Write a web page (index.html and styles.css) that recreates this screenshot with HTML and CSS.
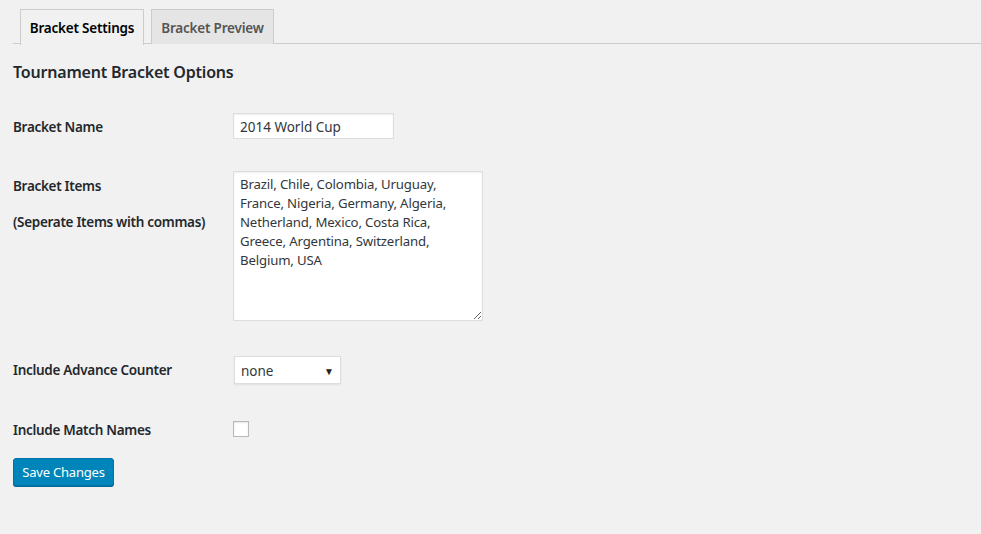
FILE: index.html
```html
<!DOCTYPE html>
<html>
<head>
<meta charset="utf-8">
<link rel="stylesheet" href="styles.css">
</head>
<body>
<div class="wrap">
  <nav class="tabs">
    <a class="tab active">Bracket Settings</a>
    <a class="tab">Bracket Preview</a>
  </nav>
  <h2 class="title">Tournament Bracket Options</h2>
  <form class="form">
    <div class="row row-name">
      <div class="label"><div class="lbl">Bracket Name</div></div>
      <div class="field"><input class="text" type="text" value="2014 World Cup"></div>
    </div>
    <div class="row row-items">
      <div class="label">
        <div class="lbl">Bracket Items</div>
        <div class="lbl note">(Seperate Items with commas)</div>
      </div>
      <div class="field"><textarea class="area">Brazil, Chile, Colombia, Uruguay, France, Nigeria, Germany, Algeria, Netherland, Mexico, Costa Rica, Greece, Argentina, Switzerland, Belgium, USA</textarea></div>
    </div>
    <div class="row row-counter">
      <div class="label"><div class="lbl">Include Advance Counter</div></div>
      <div class="field">
        <div class="select"><span>none</span><span class="arrow">&#9660;</span></div>
      </div>
    </div>
    <div class="row row-match">
      <div class="label"><div class="lbl">Include Match Names</div></div>
      <div class="field"><span class="check"></span></div>
    </div>
    <button type="button" class="btn">Save Changes</button>
  </form>
</div>
</body>
</html>
```
FILE: styles.css
```css
html, body {
  margin: 0;
  padding: 0;
  background: #f1f1f1;
  height: 100%;
}
body {
  font-family: "Noto Sans", "Open Sans", sans-serif;
  color: #23282d;
  font-size: 13px;
}
.wrap {
  padding: 9px 0 0 13px;
}
.tabs {
  display: flex;
  gap: 7px;
  padding-left: 7px;
  border-bottom: 1px solid #ccc;
  height: 35px;
  box-sizing: border-box;
}
.tab {
  display: block;
  height: 35px;
  box-sizing: border-box;
  border: 1px solid #ccc;
  border-bottom: none;
  background: #e5e5e5;
  color: #555;
  font-size: 13.5px;
  font-weight: 600;
  line-height: 36px;
  letter-spacing: -0.2px;
  text-align: center;
}
.tab.active {
  background: #f1f1f1;
  color: #000;
  height: 36px;
  margin-bottom: -1px;
}
.tab:first-child { width: 124px; }
.tab:last-child { width: 123px; }
.title {
  margin: 17px 0 0;
  font-size: 16px;
  font-weight: 600;
  line-height: 22px;
  letter-spacing: -0.2px;
  color: #23282d;
}
.form {
  padding-top: 30px;
}
.row {
  display: grid;
  grid-template-columns: 220px 1fr;
}
.lbl {
  font-size: 13.5px;
  font-weight: 600;
  line-height: 20px;
  letter-spacing: -0.3px;
}
.row-name .label { padding-top: 4px; }
.row-items { margin-top: 32px; }
.row-items .label { padding-top: 5px; }
.note { margin-top: 16px; }
.row-counter { margin-top: 35px; }
.row-counter .label { padding-top: 4px; }
.row-match { margin-top: 37px; }
.row-match .label { margin-top: -1px; }
.text {
  width: 161px;
  height: 26px;
  box-sizing: border-box;
  border: 1px solid #ddd;
  background: #fff;
  font-family: inherit;
  font-size: 13.5px;
  color: #32373c;
  padding: 1px 6px 0;
  margin: 0;
  outline: none;
  box-shadow: inset 0 1px 2px rgba(0,0,0,0.07);
}
.area {
  display: block;
  width: 250px;
  height: 150px;
  box-sizing: border-box;
  border: 1px solid #ddd;
  background: #fff;
  font-family: inherit;
  font-size: 13.2px;
  line-height: 19px;
  color: #32373c;
  padding: 3px 6px;
  margin: 0;
  outline: none;
  resize: both;
  box-shadow: inset 0 1px 2px rgba(0,0,0,0.07);
  overflow: hidden;
  letter-spacing: -0.15px;
}
.select {
  margin-left: 1px;
  width: 107px;
  height: 28px;
  box-sizing: border-box;
  border: 1px solid #ddd;
  background: #fff;
  display: flex;
  align-items: center;
  justify-content: space-between;
  padding: 1px 6px 0 6px;
  font-size: 13.5px;
  color: #32373c;
  box-shadow: 0 1px 2px rgba(0,0,0,0.07);
}
.arrow {
  font-size: 10px;
  color: #222;
}
.check {
  display: block;
  width: 16px;
  height: 16px;
  box-sizing: border-box;
  border: 1px solid #b4b9be;
  background: #fff;
  box-shadow: inset 0 1px 2px rgba(0,0,0,0.1);
}
.btn {
  display: block;
  margin-top: 18px;
  height: 28px;
  width: 101px;
  padding: 0;
  background: #0085ba;
  border: 1px solid #0073aa;
  border-radius: 3px;
  box-shadow: 0 1px 0 #006799;
  color: #fff;
  font-family: inherit;
  font-size: 13px;
  letter-spacing: -0.2px;
}
```
